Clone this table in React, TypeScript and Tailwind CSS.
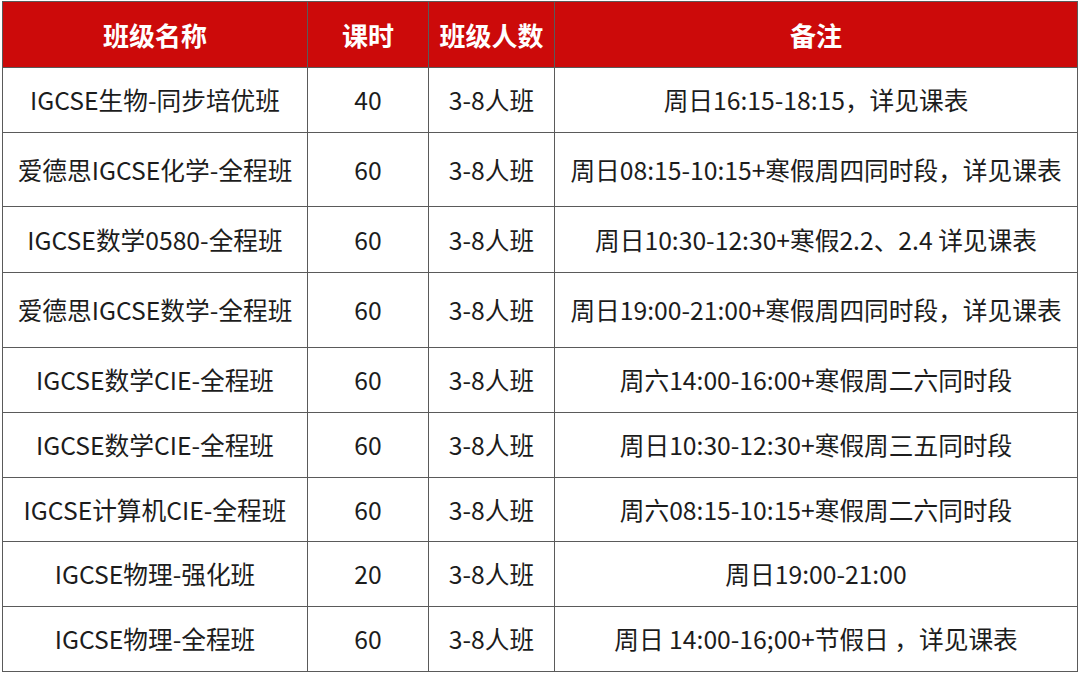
import React from "react";

const rows: { name: string; hours: string; size: string; note: string; h: string }[] = [
  { name: "IGCSE生物-同步培优班", hours: "40", size: "3-8人班", note: "周日16:15-18:15，详见课表", h: "h-[65px]" },
  { name: "爱德思IGCSE化学-全程班", hours: "60", size: "3-8人班", note: "周日08:15-10:15+寒假周四同时段，详见课表", h: "h-[74px]" },
  { name: "IGCSE数学0580-全程班", hours: "60", size: "3-8人班", note: "周日10:30-12:30+寒假2.2、2.4 详见课表", h: "h-[66px]" },
  { name: "爱德思IGCSE数学-全程班", hours: "60", size: "3-8人班", note: "周日19:00-21:00+寒假周四同时段，详见课表", h: "h-[75px]" },
  { name: "IGCSE数学CIE-全程班", hours: "60", size: "3-8人班", note: "周六14:00-16:00+寒假周二六同时段", h: "h-[65px]" },
  { name: "IGCSE数学CIE-全程班", hours: "60", size: "3-8人班", note: "周日10:30-12:30+寒假周三五同时段", h: "h-[65px]" },
  { name: "IGCSE计算机CIE-全程班", hours: "60", size: "3-8人班", note: "周六08:15-10:15+寒假周二六同时段", h: "h-[64px]" },
  { name: "IGCSE物理-强化班", hours: "20", size: "3-8人班", note: "周日19:00-21:00", h: "h-[65px]" },
  { name: "IGCSE物理-全程班", hours: "60", size: "3-8人班", note: "周日 14:00-16;00+节假日 ，详见课表", h: "h-[65px]" },
];

const cell = "flex items-center justify-center border-r border-b border-[#5a5a5a] text-center whitespace-nowrap";

export default function App() {
  return (
    <div className="w-[1080px] h-[673px] bg-white overflow-hidden" style={{ fontFamily: '"Noto Sans CJK SC", "Noto Sans", sans-serif' }}>
      <div className="ml-[2px] mt-[1px] w-[1076px] grid grid-cols-[305px_121px_126px_523px] border-l border-t border-[#5a5a5a]">
        {["班级名称", "课时", "班级人数", "备注"].map((t) => (
          <div key={t} className={`${cell} h-[66px] bg-[#cc0a0a] text-white font-bold text-[26px]`}>
            {t}
          </div>
        ))}
        {rows.map((r, i) => (
          <React.Fragment key={i}>
            <div className={`${cell} ${r.h} text-[24.7px] text-[#1c1c1c]`}>{r.name}</div>
            <div className={`${cell} ${r.h} text-[24.7px] text-[#1c1c1c]`}>{r.hours}</div>
            <div className={`${cell} ${r.h} text-[24.7px] text-[#1c1c1c]`}>{r.size}</div>
            <div className={`${cell} ${r.h} text-[24.7px] text-[#1c1c1c]`}>{r.note}</div>
          </React.Fragment>
        ))}
      </div>
    </div>
  );
}
